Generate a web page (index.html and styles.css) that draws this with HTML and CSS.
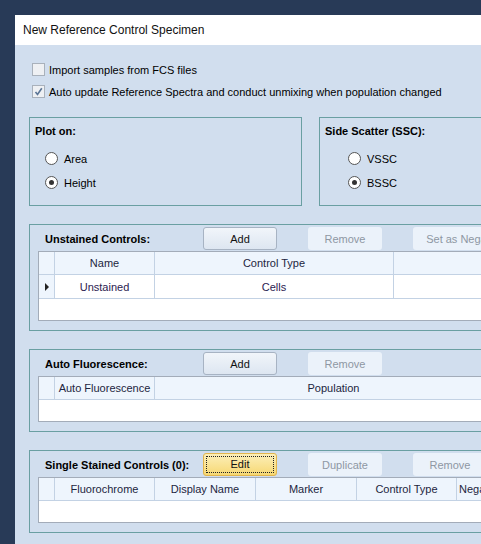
FILE: index.html
```html
<!DOCTYPE html>
<html lang="en">
<head>
    <meta charset="UTF-8">
    <title>New Reference Control Specimen</title>
    <link rel="stylesheet" href="styles.css">
</head>
<body>
    <div class="window">
        <div class="titlebar">New Reference Control Specimen</div>
        <div class="content">
            <div class="options">
                <div class="check"><span class="box"></span>Import samples from FCS files</div>
                <div class="check">
                    <span class="box">
                        <svg width="9" height="9" viewBox="0 0 9 9"><path d="M1.5 5 L3.5 7.5 L7.8 1.2" fill="none" stroke="#5b7596" stroke-width="1.6"/></svg>
                    </span>Auto update Reference Spectra and conduct unmixing when population changed
                </div>
            </div>

            <div class="pair">
                <div class="group small">
                    <div class="group-title">Plot on:</div>
                    <div class="radio"><span class="dot"></span>Area</div>
                    <div class="radio"><span class="dot on"></span>Height</div>
                </div>
                <div class="group small ssc">
                    <div class="group-title">Side Scatter (SSC):</div>
                    <div class="radio"><span class="dot"></span>VSSC</div>
                    <div class="radio"><span class="dot on"></span>BSSC</div>
                </div>
            </div>

            <div class="group wide tall">
                <div class="toolbar">
                    <div class="group-title">Unstained Controls:</div>
                    <button class="btn">Add</button>
                    <button class="btn off">Remove</button>
                    <button class="btn off long">Set as Negative</button>
                </div>
                <div class="grid g1">
                    <div class="gr head">
                        <div class="rh"></div>
                        <div class="c w100">Name</div>
                        <div class="c w239">Control Type</div>
                        <div class="c last"></div>
                    </div>
                    <div class="gr data">
                        <div class="rh"><span class="arrow"></span></div>
                        <div class="c w100">Unstained</div>
                        <div class="c w239">Cells</div>
                        <div class="c last"></div>
                    </div>
                </div>
            </div>

            <div class="group wide">
                <div class="toolbar">
                    <div class="group-title">Auto Fluorescence:</div>
                    <button class="btn">Add</button>
                    <button class="btn off">Remove</button>
                </div>
                <div class="grid g2">
                    <div class="gr head">
                        <div class="rh"></div>
                        <div class="c w100">Auto Fluorescence</div>
                        <div class="c w358">Population</div>
                    </div>
                </div>
            </div>

            <div class="group wide">
                <div class="toolbar">
                    <div class="group-title">Single Stained Controls (0):</div>
                    <button class="btn focus"><span>Edit</span></button>
                    <button class="btn off">Duplicate</button>
                    <button class="btn off">Remove</button>
                </div>
                <div class="grid g2">
                    <div class="gr head">
                        <div class="rh"></div>
                        <div class="c w100">Fluorochrome</div>
                        <div class="c w101">Display Name</div>
                        <div class="c w101">Marker</div>
                        <div class="c w100">Control Type</div>
                        <div class="c left">Negative Control</div>
                    </div>
                </div>
            </div>
        </div>
    </div>
</body>
</html>
```

FILE: styles.css
```css
html, body {
    margin: 0;
    height: 100%;
    overflow: hidden;
}
body {
    background-color: #283a57;
    font-family: "Liberation Sans", Arial, sans-serif;
    font-size: 11px;
    color: #000;
}
.window {
    margin: 15px 0 0 15px;
    width: 560px;
    height: 600px;
    background-color: #d1deee;
}
.titlebar {
    height: 30px;
    line-height: 30px;
    background-color: #fff;
    padding-left: 8px;
    font-size: 12px;
    color: #111;
}
.content {
    padding: 18px 0 0 14px;
}
.options {
    display: flex;
    flex-direction: column;
    gap: 9px;
    padding-left: 3px;
}
.check {
    display: flex;
    align-items: center;
    height: 13px;
    white-space: nowrap;
}
.box {
    width: 11px;
    height: 11px;
    border: 1px solid #a9b1bb;
    background-color: #eef0f3;
    margin-right: 4px;
    display: flex;
    align-items: center;
    justify-content: center;
}
.pair {
    display: flex;
    gap: 17px;
    margin-top: 19px;
}
.group {
    border: 1px solid #6a9fa2;
    box-sizing: border-box;
    flex-shrink: 0;
}
.small {
    width: 273px;
    height: 89px;
    padding: 6px 0 0 5px;
}
.group-title {
    font-weight: bold;
    line-height: 14px;
    white-space: nowrap;
}
.radio {
    display: flex;
    align-items: center;
    height: 13px;
    margin-left: 10px;
}
.small .group-title + .radio {
    margin-top: 14px;
}
.radio + .radio {
    margin-top: 11px;
}
.ssc .radio {
    margin-left: 23px;
}
.dot {
    width: 11px;
    height: 11px;
    border: 1px solid #555;
    border-radius: 50%;
    background-color: #fff;
    margin-right: 6px;
    display: flex;
    align-items: center;
    justify-content: center;
}
.dot.on::after {
    content: "";
    width: 5px;
    height: 5px;
    border-radius: 50%;
    background-color: #333;
}
.wide {
    width: 560px;
    height: 83px;
    margin-top: 18px;
    padding: 2px 0 0 8px;
}
.wide.tall {
    height: 107px;
}
.toolbar {
    display: flex;
    align-items: center;
    height: 23px;
}
.toolbar .group-title {
    width: 158px;
    padding-left: 7px;
}
.btn {
    width: 74px;
    height: 23px;
    margin-right: 31px;
    font-family: inherit;
    font-size: 11px;
    color: #111;
    border: 1px solid #a7b3c3;
    border-radius: 3px;
    background: linear-gradient(#f1f5fa, #dde6f1);
    padding: 0;
    flex-shrink: 0;
}
.btn.off {
    border-color: transparent;
    background: #ebf2fa;
    color: #8e97a3;
    white-space: nowrap;
    overflow: hidden;
}
.btn.long {
    width: 104px;
}
.btn.focus {
    border-color: #e2b54c;
    background: linear-gradient(#fcefb9, #f7d873);
    padding: 2px;
}
.btn.focus span {
    display: block;
    height: 100%;
    box-sizing: border-box;
    border: 1px dotted #222;
    line-height: 15px;
}
.grid {
    margin-top: 1px;
    width: 560px;
    border: 1px solid #a3acb9;
    background-color: #fff;
    box-sizing: border-box;
}
.g1 {
    height: 70px;
}
.g2 {
    height: 46px;
}
.gr {
    display: flex;
    height: 22px;
    border-bottom: 1px solid #c3d2e4;
}
.head {
    background-color: #eef5fd;
    color: #1d2540;
}
.data {
    height: 23px;
    color: #2b2150;
}
.rh {
    width: 15px;
    border-right: 1px solid #c3d2e4;
    background-color: #eef5fd;
    display: flex;
    align-items: center;
    justify-content: center;
    flex-shrink: 0;
}
.arrow {
    width: 0;
    height: 0;
    border-top: 4px solid transparent;
    border-bottom: 4px solid transparent;
    border-left: 4px solid #222;
    margin-left: 1px;
}
.c {
    border-right: 1px solid #c3d2e4;
    display: flex;
    align-items: center;
    justify-content: center;
    white-space: nowrap;
    overflow: hidden;
    flex-shrink: 0;
}
.c.left {
    justify-content: flex-start;
    padding-left: 2px;
    width: 100px;
}
.w100 { width: 99px; }
.w101 { width: 100px; }
.w239 { width: 238px; }
.w358 { width: 357px; }
.last {
    flex: 1;
}
```
